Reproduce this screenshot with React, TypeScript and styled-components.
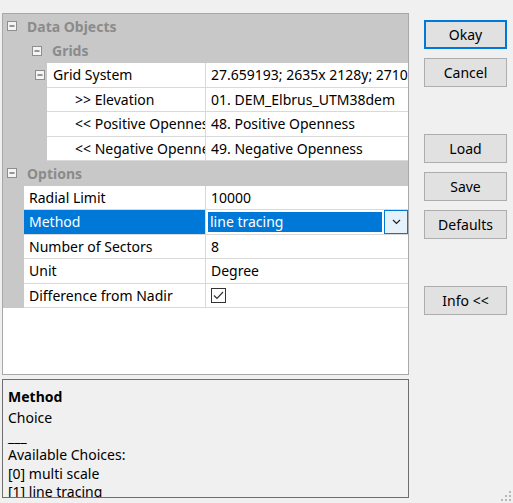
import React from "react";
import styled, { createGlobalStyle } from "styled-components";

const GlobalStyle = createGlobalStyle`
  html, body {
    margin: 0;
    padding: 0;
    background: #f0f0f0;
  }
  body {
    font-family: "Noto Sans", "Open Sans", sans-serif;
    font-size: 14px;
    color: #000;
  }
`;

const Window = styled.div`
  position: relative;
  width: 513px;
  height: 503px;
  box-sizing: border-box;
  padding: 13px 0 0 2px;
  display: flex;
  align-items: flex-start;
  background: #f0f0f0;
  overflow: hidden;
`;

const LeftColumn = styled.div`
  width: 407px;
  display: flex;
  flex-direction: column;
  gap: 4px;
`;

const PropPanel = styled.div`
  height: 362px;
  box-sizing: border-box;
  border: 1px solid #a8a8a8;
  background: #fff;
  overflow: hidden;
`;

const CategoryRow = styled.div<{ $level: number }>`
  height: 24.5px;
  display: flex;
  align-items: center;
  gap: 10px;
  padding-left: ${({ $level }) => ($level === 0 ? 4 : 29)}px;
  background: #c8c8c8;
  box-sizing: border-box;
`;

const CategoryLabel = styled.span`
  font-weight: 700;
  color: #8b8b8b;
  white-space: nowrap;
`;

const PropRow = styled.div`
  height: 24.5px;
  display: flex;
`;

const NameArea = styled.div`
  width: 203px;
  display: flex;
  flex: none;
`;

const Gutter = styled.div<{ $width: number }>`
  width: ${({ $width }) => $width}px;
  flex: none;
  background: #c8c8c8;
  display: flex;
  align-items: center;
  padding-left: ${({ $width }) => ($width > 30 ? 32 : 0)}px;
  box-sizing: border-box;
`;

const NameCell = styled.div<{ $indent: number; $selected?: boolean }>`
  flex: 1;
  min-width: 0;
  display: flex;
  align-items: center;
  padding-left: ${({ $indent }) => $indent}px;
  border-right: 1px solid #d9d9d9;
  border-bottom: 1px solid #d9d9d9;
  background: ${({ $selected }) => ($selected ? "#0078d7" : "#fff")};
  color: ${({ $selected }) => ($selected ? "#fff" : "#000")};
  white-space: nowrap;
  overflow: hidden;
`;

const ValueCell = styled.div`
  flex: 1;
  min-width: 0;
  display: flex;
  align-items: center;
  padding-left: 5px;
  border-bottom: 1px solid #d9d9d9;
  white-space: nowrap;
  overflow: hidden;
`;

const ComboCell = styled.div`
  flex: 1;
  min-width: 0;
  display: flex;
  align-items: stretch;
  border-bottom: 1px solid #d9d9d9;
  background: #fff;
`;

const ComboText = styled.div`
  flex: 1;
  margin: 2px 2px 2px 2px;
  padding-left: 2px;
  display: flex;
  align-items: center;
  background: #0078d7;
  color: #fff;
  white-space: nowrap;
`;

const ComboButton = styled.div`
  width: 24px;
  box-sizing: border-box;
  border: 1px solid #0078d7;
  background: #e5f1fb;
  display: flex;
  align-items: center;
  justify-content: center;
`;

const InfoPanel = styled.div`
  height: 119px;
  box-sizing: border-box;
  border: 1px solid #6e6e6e;
  background: #f0f0f0;
  padding: 7px 0 0 5px;
  overflow: hidden;
  line-height: 18.5px;
`;

const InfoTitle = styled.div`
  font-weight: 700;
  line-height: 19px;
  margin-bottom: 3px;
`;

const InfoLine = styled.div`
  white-space: nowrap;
`;

const ButtonColumn = styled.div`
  margin-left: 15px;
  padding-top: 7px;
  display: flex;
  flex-direction: column;
`;

const DialogButton = styled.button<{ $default?: boolean; $space: number }>`
  width: 83px;
  height: 29px;
  margin-top: ${({ $space }) => $space}px;
  box-sizing: border-box;
  border: ${({ $default }) => ($default ? "2px solid #0078d7" : "1px solid #adadad")};
  background: #e1e1e1;
  font-family: inherit;
  font-size: 14px;
  color: #000;
  padding: 0;
`;

const Grip = styled.svg`
  position: absolute;
  right: 1px;
  bottom: 1px;
`;

const ExpandIcon = () => (
  <svg width="10" height="10" viewBox="0 0 10 10">
    <rect x="0.5" y="0.5" width="9" height="9" fill="#f4f4f4" stroke="#8e8e8e" />
    <line x1="2.5" y1="5" x2="7.5" y2="5" stroke="#4a5a6a" strokeWidth="1.2" />
  </svg>
);

const Chevron = () => (
  <svg width="9" height="6" viewBox="0 0 9 6">
    <path d="M1 1 L4.5 4.5 L8 1" fill="none" stroke="#222" strokeWidth="1.2" />
  </svg>
);

const CheckBox = () => (
  <svg width="15" height="15" viewBox="0 0 15 15">
    <rect x="0.5" y="0.5" width="14" height="14" fill="#fff" stroke="#333" />
    <path d="M3 7.5 L6 10.5 L12 4" fill="none" stroke="#333" strokeWidth="1.2" />
  </svg>
);

type Prop = {
  name: string;
  value?: string;
  gutter: number;
  indent: number;
  expand?: boolean;
  kind?: "combo" | "check";
  selected?: boolean;
};

const dataProps: Prop[] = [
  { name: "Grid System", value: "27.659193; 2635x 2128y; 271025.5x 4783975.5y", gutter: 44, indent: 6, expand: true },
  { name: ">> Elevation", value: "01. DEM_Elbrus_UTM38dem", gutter: 44, indent: 28 },
  { name: "<< Positive Openness", value: "48. Positive Openness", gutter: 44, indent: 28 },
  { name: "<< Negative Openness", value: "49. Negative Openness", gutter: 44, indent: 28 },
];

const optionProps: Prop[] = [
  { name: "Radial Limit", value: "10000", gutter: 21, indent: 5 },
  { name: "Method", value: "line tracing", gutter: 21, indent: 5, kind: "combo", selected: true },
  { name: "Number of Sectors", value: "8", gutter: 21, indent: 5 },
  { name: "Unit", value: "Degree", gutter: 21, indent: 5 },
  { name: "Difference from Nadir", gutter: 21, indent: 5, kind: "check" },
];

function PropertyRow({ prop }: { prop: Prop }) {
  return (
    <PropRow>
      <NameArea>
        <Gutter $width={prop.gutter}>{prop.expand && <ExpandIcon />}</Gutter>
        <NameCell $indent={prop.indent} $selected={prop.selected}>
          {prop.name}
        </NameCell>
      </NameArea>
      {prop.kind === "combo" ? (
        <ComboCell>
          <ComboText>{prop.value}</ComboText>
          <ComboButton>
            <Chevron />
          </ComboButton>
        </ComboCell>
      ) : (
        <ValueCell>{prop.kind === "check" ? <CheckBox /> : prop.value}</ValueCell>
      )}
    </PropRow>
  );
}

const buttons = [
  { label: "Okay", space: 0, def: true },
  { label: "Cancel", space: 9 },
  { label: "Load", space: 47 },
  { label: "Save", space: 9 },
  { label: "Defaults", space: 9 },
  { label: "Info <<", space: 47 },
];

export default function App() {
  return (
    <>
      <GlobalStyle />
      <Window>
        <LeftColumn>
          <PropPanel>
            <CategoryRow $level={0}>
              <ExpandIcon />
              <CategoryLabel>Data Objects</CategoryLabel>
            </CategoryRow>
            <CategoryRow $level={1}>
              <ExpandIcon />
              <CategoryLabel>Grids</CategoryLabel>
            </CategoryRow>
            {dataProps.map((p) => (
              <PropertyRow key={p.name} prop={p} />
            ))}
            <CategoryRow $level={0}>
              <ExpandIcon />
              <CategoryLabel>Options</CategoryLabel>
            </CategoryRow>
            {optionProps.map((p) => (
              <PropertyRow key={p.name} prop={p} />
            ))}
          </PropPanel>
          <InfoPanel>
            <InfoTitle>Method</InfoTitle>
            <InfoLine>Choice</InfoLine>
            <InfoLine>___</InfoLine>
            <InfoLine>Available Choices:</InfoLine>
            <InfoLine>[0] multi scale</InfoLine>
            <InfoLine>[1] line tracing</InfoLine>
          </InfoPanel>
        </LeftColumn>
        <ButtonColumn>
          {buttons.map((b) => (
            <DialogButton key={b.label} $default={b.def} $space={b.space}>
              {b.label}
            </DialogButton>
          ))}
        </ButtonColumn>
        <Grip width="12" height="12" viewBox="0 0 12 12">
          {[
            [9, 1],
            [9, 5],
            [5, 5],
            [9, 9],
            [5, 9],
            [1, 9],
          ].map(([x, y]) => (
            <rect key={`${x}-${y}`} x={x} y={y} width="2" height="2" fill="#b8b8b8" />
          ))}
        </Grip>
      </Window>
    </>
  );
}
